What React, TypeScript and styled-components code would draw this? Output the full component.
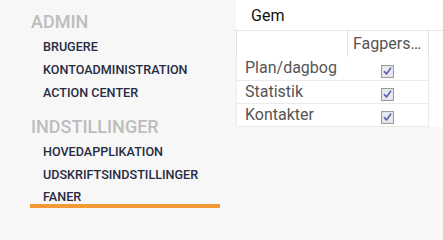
import React from "react";
import styled, { createGlobalStyle } from "styled-components";

const Global = createGlobalStyle`
  html, body { margin: 0; padding: 0; background: #f7f7f7; }
  body { font-family: Roboto, "Liberation Sans", Arial, sans-serif; }
  * { box-sizing: border-box; }
`;

const Page = styled.div`
  display: flex;
  width: 443px;
  height: 214px;
  overflow: hidden;
  background: #f7f7f7;
`;

const Sidebar = styled.nav`
  width: 236px;
  flex: none;
  padding: 10px 16px 0 30px;
  display: flex;
  flex-direction: column;
`;

const SectionTitle = styled.div<{ $first?: boolean }>`
  height: 24px;
  line-height: 24px;
  margin-top: ${(p) => (p.$first ? "0" : "11px")};
  margin-bottom: 1px;
  padding-left: 1px;
  font-size: 18px;
  font-weight: 500;
  color: #bdbdbd;
`;

const NavItem = styled.div<{ $active?: boolean }>`
  height: ${(p) => (p.$active ? "22px" : "23px")};
  line-height: ${(p) => (p.$active ? "22px" : "23px")};
  padding-left: 13px;
  font-size: 12.6px;
  font-weight: 500;
  color: #272b42;
  white-space: nowrap;
  border-bottom: ${(p) => (p.$active ? "4px solid #f39a36" : "none")};
`;

const Main = styled.main`
  flex: 1;
  align-self: flex-start;
  background: #ffffff;
  display: flex;
  flex-direction: column;
`;

const Toolbar = styled.div`
  height: 31px;
  line-height: 31px;
  padding-left: 15px;
  font-size: 16px;
  color: #111111;
  border-bottom: 1px solid #e6e6e6;
`;

const Table = styled.table`
  border-collapse: collapse;
  table-layout: fixed;
  width: 192px;
  margin-top: -1px;
`;

const HeadCell = styled.th<{ $w: number }>`
  width: ${(p) => p.$w}px;
  height: 27px;
  padding: 0 5px;
  border-left: 1px solid #e2e2e2;
  border-right: 1px solid #e2e2e2;
  font-size: 16px;
  font-weight: 400;
  color: #555555;
  text-align: center;
  white-space: nowrap;
  overflow: hidden;
  text-overflow: ellipsis;
`;

const Row = styled.tr`
  border: 1px solid #ebebeb;
  border-top: none;
`;

const Cell = styled.td<{ $center?: boolean }>`
  height: 23px;
  padding: ${(p) => (p.$center ? "0" : "0 0 0 8px")};
  font-size: 16px;
  color: #555555;
  text-align: ${(p) => (p.$center ? "center" : "left")};
  vertical-align: middle;
  line-height: 22px;
`;

const Check = styled.span`
  display: inline-block;
  width: 13px;
  height: 13px;
  vertical-align: middle;
  margin-top: -2px;
`;

const CheckIcon = () => (
  <Check>
    <svg width="13" height="13" viewBox="0 0 13 13">
      <rect x="0.5" y="0.5" width="12" height="12" fill="#dedee2" stroke="#9c9c9c" />
      <rect x="1.5" y="1.5" width="10" height="10" fill="#e9e9ee" stroke="none" />
      <path d="M3.4 6.6 L5.5 9 L9.6 3.2" fill="none" stroke="#5763b0" strokeWidth="1.6" strokeLinecap="round" strokeLinejoin="round" />
    </svg>
  </Check>
);

const rows = ["Plan/dagbog", "Statistik", "Kontakter"];

export default function App() {
  return (
    <>
      <Global />
      <Page>
        <Sidebar>
          <SectionTitle $first>ADMIN</SectionTitle>
          <NavItem>BRUGERE</NavItem>
          <NavItem>KONTOADMINISTRATION</NavItem>
          <NavItem>ACTION CENTER</NavItem>
          <SectionTitle>INDSTILLINGER</SectionTitle>
          <NavItem>HOVEDAPPLIKATION</NavItem>
          <NavItem>UDSKRIFTSINDSTILLINGER</NavItem>
          <NavItem $active>FANER</NavItem>
        </Sidebar>
        <Main>
          <Toolbar>Gem</Toolbar>
          <Table>
            <thead>
              <tr>
                <HeadCell $w={111}></HeadCell>
                <HeadCell $w={81}>Fagpersoner</HeadCell>
              </tr>
            </thead>
            <tbody>
              {rows.map((r) => (
                <Row key={r}>
                  <Cell>{r}</Cell>
                  <Cell $center>
                    <CheckIcon />
                  </Cell>
                </Row>
              ))}
            </tbody>
          </Table>
        </Main>
      </Page>
    </>
  );
}
